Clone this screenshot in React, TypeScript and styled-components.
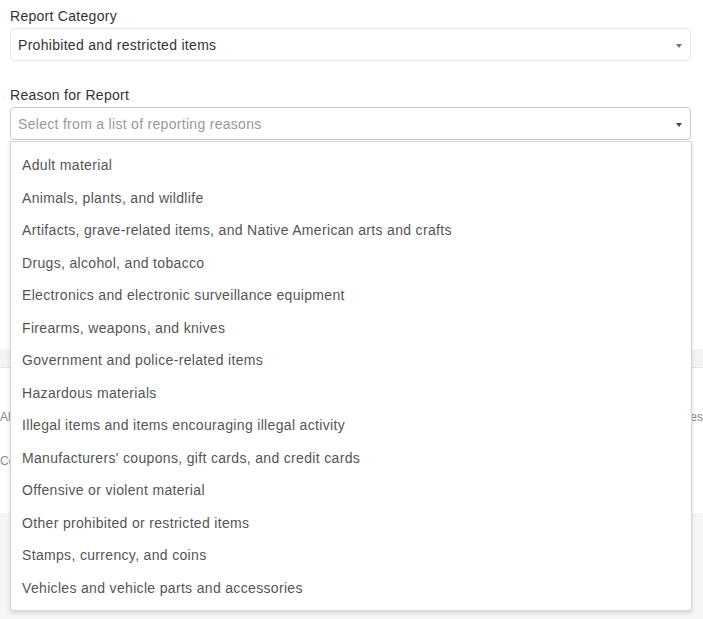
import React from "react";
import styled, { createGlobalStyle } from "styled-components";

const GlobalStyle = createGlobalStyle`
  html, body { margin: 0; padding: 0; background: #fff; }
  body {
    font-family: "Liberation Sans", Arial, Helvetica, sans-serif;
    font-size: 14px;
    color: #333;
    overflow: hidden;
  }
  * { box-sizing: border-box; }
`;

const Page = styled.div`
  position: relative;
  width: 703px;
  height: 619px;
  overflow: hidden;
  display: flex;
  flex-direction: column;
`;

const Form = styled.div`
  display: flex;
  flex-direction: column;
  padding: 6px 12px 0 10px;
`;

const Field = styled.div<{ $gap?: number }>`
  display: flex;
  flex-direction: column;
  margin-top: ${(p) => p.$gap ?? 0}px;
`;

const Label = styled.label`
  font-size: 14px;
  line-height: 20px;
  letter-spacing: 0.28px;
  color: #333;
  margin-bottom: 2px;
`;

const SelectWrap = styled.div`
  position: relative;
`;

const SelectBox = styled.div<{ $active?: boolean }>`
  position: relative;
  height: 33px;
  display: flex;
  align-items: center;
  padding: 0 24px 0 7px;
  border: 1px solid ${(p) => (p.$active ? "#c8c8c8" : "#e6e6e6")};
  border-radius: 4px;
  background: #fff;
  font-size: 14px;
  letter-spacing: 0.3px;
  color: #333;
`;

const Placeholder = styled.span`
  color: #999;
`;

const Caret = styled.span<{ $dark?: boolean }>`
  position: absolute;
  right: 8px;
  top: 50%;
  margin-top: -1px;
  width: 0;
  height: 0;
  border-left: 3.5px solid transparent;
  border-right: 3.5px solid transparent;
  border-top: 4px solid ${(p) => (p.$dark ? "#444" : "#777")};
`;

const Menu = styled.ul`
  position: absolute;
  top: calc(100% + 1px);
  left: 0;
  right: -1px;
  z-index: 10;
  margin: 0;
  padding: 7px 0 6px;
  list-style: none;
  background: #fff;
  border: 1px solid #d4d4d4;
  border-radius: 0 0 3px 3px;
  box-shadow: 0 2px 4px rgba(0, 0, 0, 0.14);
`;

const MenuItem = styled.li`
  padding: 6.25px 11px;
  line-height: 20px;
  font-size: 14px;
  letter-spacing: 0.33px;
  color: #555;
  white-space: nowrap;
`;

const Band = styled.div`
  margin-top: 209px;
  height: 19px;
  background: #f4f4f4;
  border-bottom: 1px solid #e6e6e6;
`;

const NoteRow = styled.div<{ $top: number }>`
  margin-top: ${(p) => p.$top}px;
  display: flex;
  justify-content: space-between;
  font-size: 12px;
  line-height: 14px;
  color: #8a8a8a;
  white-space: nowrap;
`;

const Footer = styled.div`
  margin-top: auto;
  height: 106px;
  background: #f6f6f6;
`;

const reasons = [
  "Adult material",
  "Animals, plants, and wildlife",
  "Artifacts, grave-related items, and Native American arts and crafts",
  "Drugs, alcohol, and tobacco",
  "Electronics and electronic surveillance equipment",
  "Firearms, weapons, and knives",
  "Government and police-related items",
  "Hazardous materials",
  "Illegal items and items encouraging illegal activity",
  "Manufacturers' coupons, gift cards, and credit cards",
  "Offensive or violent material",
  "Other prohibited or restricted items",
  "Stamps, currency, and coins",
  "Vehicles and vehicle parts and accessories",
];

export default function App() {
  return (
    <>
      <GlobalStyle />
      <Page>
        <Form>
          <Field>
            <Label>Report Category</Label>
            <SelectBox>
              Prohibited and restricted items
              <Caret />
            </SelectBox>
          </Field>
          <Field $gap={24}>
            <Label>Reason for Report</Label>
            <SelectWrap>
              <SelectBox $active>
                <Placeholder>Select from a list of reporting reasons</Placeholder>
                <Caret $dark />
              </SelectBox>
              <Menu>
                {reasons.map((r) => (
                  <MenuItem key={r}>{r}</MenuItem>
                ))}
              </Menu>
            </SelectWrap>
          </Field>
        </Form>
        <Band />
        <NoteRow $top={42}>
          <span>Al</span>
          <span>es</span>
        </NoteRow>
        <NoteRow $top={30}>
          <span>Cc</span>
          <span></span>
        </NoteRow>
        <Footer />
      </Page>
    </>
  );
}
